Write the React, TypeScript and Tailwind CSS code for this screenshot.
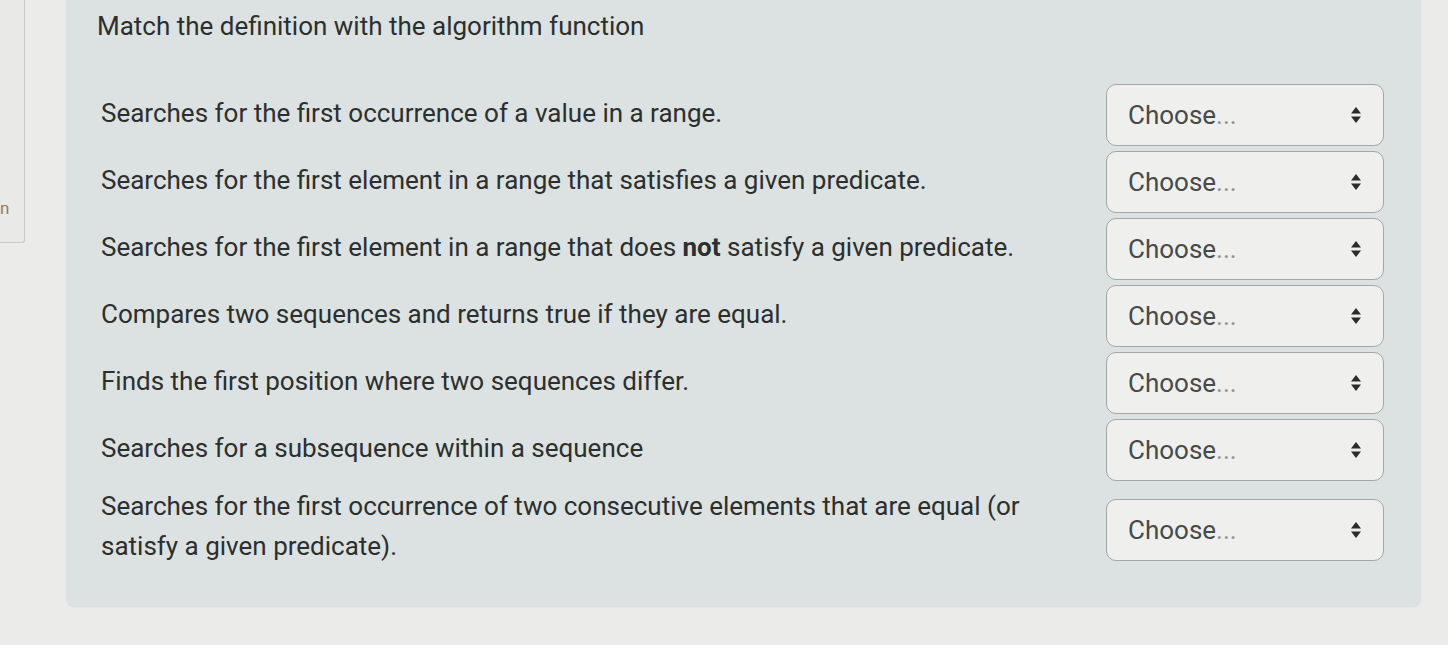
import React from "react";

type Item = { id: number; text: React.ReactNode };

const items: Item[] = [
  { id: 1, text: "Searches for the first occurrence of a value in a range." },
  { id: 2, text: "Searches for the first element in a range that satisfies a given predicate." },
  {
    id: 3,
    text: (
      <>
        Searches for the first element in a range that does <b className="font-bold">not</b> satisfy a given predicate.
      </>
    ),
  },
  { id: 4, text: "Compares two sequences and returns true if they are equal." },
  { id: 5, text: "Finds the first position where two sequences differ." },
  { id: 6, text: "Searches for a subsequence within a sequence" },
  {
    id: 7,
    text: "Searches for the first occurrence of two consecutive elements that are equal (or satisfy a given predicate).",
  },
];

function SortIcon() {
  return (
    <svg width="12" height="18" viewBox="0 0 12 18" className="shrink-0">
      <path d="M6 1 L11 7.5 H1 Z" fill="#2b2b2b" />
      <path d="M6 17 L11 10.5 H1 Z" fill="#2b2b2b" />
    </svg>
  );
}

function ChooseSelect({ offset }: { offset?: boolean }) {
  return (
    <div
      className={`ml-auto flex h-[62px] w-[278px] shrink-0 items-center justify-between rounded-[10px] border-[1.5px] border-[#a3a8a6] bg-[#eff0ee] pl-[21px] pr-[21px] text-[26px] text-[#474a49] ${
        offset ? "mt-[8px]" : ""
      }`}
    >
      <span>
        Choose<span className="text-[#8f9391]">...</span>
      </span>
      <SortIcon />
    </div>
  );
}

export default function App() {
  return (
    <div
      className="relative flex h-[645px] w-full overflow-hidden bg-[#ebebe9]"
      style={{ fontFamily: "Roboto, 'Liberation Sans', sans-serif" }}
    >
      {/* side tab peeking in from the left */}
      <div className="absolute left-0 top-0 h-[243px] w-[25px] rounded-br-[3px] border-b border-r border-[#c9c9c6] bg-[#e9e9e7]">
        <span className="absolute left-0 top-[200px] text-[17px] leading-none text-[#a07a52]">n</span>
      </div>

      <div className="ml-[66px] h-[606px] w-[1355px] rounded-b-[8px] bg-[#dce2e1] shadow-[0_1px_2px_rgba(0,0,0,0.06)]">
        <h2 className="pl-[31px] pt-[10px] text-[26px] leading-[32px] text-[#2b2f2e]">
          Match the definition with the algorithm function
        </h2>

        <div className="mt-[42px] flex flex-col gap-[5px] pl-[35px] pr-[37px]">
          {items.map((it) => (
            <div key={it.id} className="flex items-center">
              <p className={`w-[945px] text-[26px] leading-[40px] text-[#2b2f2e] ${it.id === 7 ? "" : "pb-[5px]"}`}>
                {it.text}
              </p>
              <ChooseSelect offset={it.id === 7} />
            </div>
          ))}
        </div>
      </div>
    </div>
  );
}
